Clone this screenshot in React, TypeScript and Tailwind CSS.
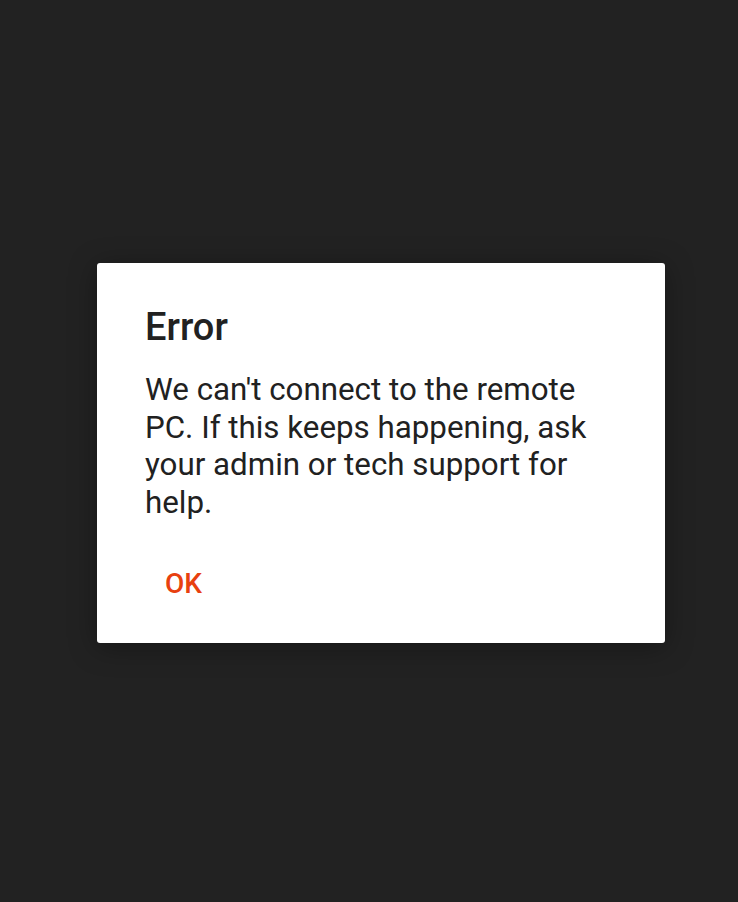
export default function App() {
  return (
    <div className="flex h-[902px] w-[738px] items-start bg-[#222222] pt-[263px] pl-[97px] font-['Roboto',sans-serif]">
      <div className="flex h-[380px] w-[568px] flex-col rounded-[3px] bg-white shadow-[0_4px_28px_rgba(0,0,0,0.35)]">
        <h1 className="pt-[43px] pl-[48px] text-[38px] font-medium leading-[42px] text-[#212121]">
          Error
        </h1>
        <p className="mt-[23px] px-[48px] text-[31.3px] leading-[37.5px] text-[#212121]">
          We can't connect to the remote PC. If this keeps happening, ask your admin or tech support for help.
        </p>
        <div className="mt-[46px] pl-[68px]">
          <button className="text-[28px] font-medium leading-[33px] text-[#e8400f]">OK</button>
        </div>
      </div>
    </div>
  );
}
